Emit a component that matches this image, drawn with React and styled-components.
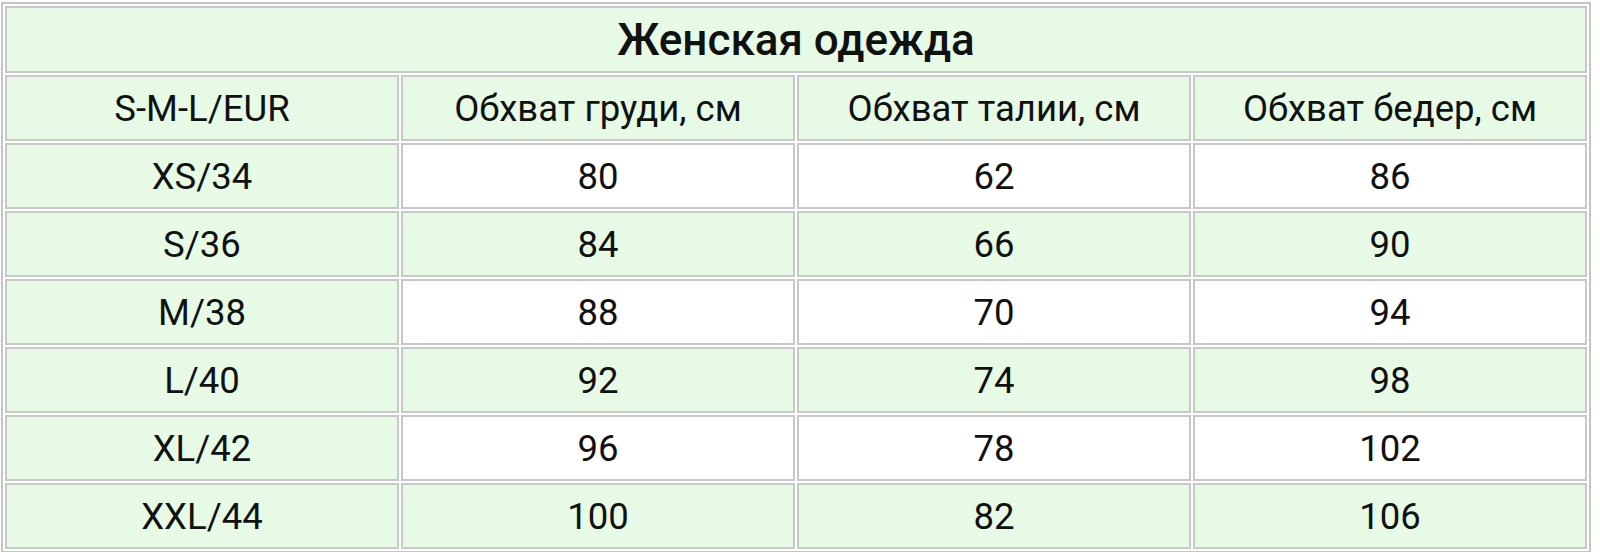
import styled, { createGlobalStyle } from 'styled-components'

const GlobalStyle = createGlobalStyle`
  body {
    margin: 0;
    background: #ffffff;
    font-family: Roboto, "Noto Sans", sans-serif;
  }
`

const sizes = [
  { size: 'XS/34', chest: 80, waist: 62, hips: 86 },
  { size: 'S/36', chest: 84, waist: 66, hips: 90 },
  { size: 'M/38', chest: 88, waist: 70, hips: 94 },
  { size: 'L/40', chest: 92, waist: 74, hips: 98 },
  { size: 'XL/42', chest: 96, waist: 78, hips: 102 },
  { size: 'XXL/44', chest: 100, waist: 82, hips: 106 },
]

function App() {
  return (
    <>
      <GlobalStyle />
      <Wrapper>
        <Table>
          <tbody>
            <tr>
              <TitleCell colSpan={4}>Женская одежда</TitleCell>
            </tr>
            <tr>
              <Cell green>S-M-L/EUR</Cell>
              <Cell green>Обхват груди, см</Cell>
              <Cell green>Обхват талии, см</Cell>
              <Cell green>Обхват бедер, см</Cell>
            </tr>
            {sizes.map((row, i) => (
              <tr key={row.size}>
                <Cell green>{row.size}</Cell>
                <Cell green={i % 2 === 1}>{row.chest}</Cell>
                <Cell green={i % 2 === 1}>{row.waist}</Cell>
                <Cell green={i % 2 === 1}>{row.hips}</Cell>
              </tr>
            ))}
          </tbody>
        </Table>
      </Wrapper>
    </>
  )
}

export default App

const Wrapper = styled.div`
  padding: 2px 0 0 1px;
`

const Table = styled.table`
  width: 1590px;
  border: 2px solid #c4c4c4;
  border-spacing: 2px;
  table-layout: fixed;
`

const Cell = styled.td`
  background: ${({ green }) => (green ? '#e6fae6' : '#ffffff')};
  border: 2px solid #c8c8c8;
  height: 62px;
  padding: 0;
  text-align: center;
  vertical-align: middle;
  font-size: 36.5px;
  color: #111111;
`

const TitleCell = styled(Cell).attrs({ green: true })`
  height: 63px;
  font-size: 44px;
  font-weight: 500;
`
